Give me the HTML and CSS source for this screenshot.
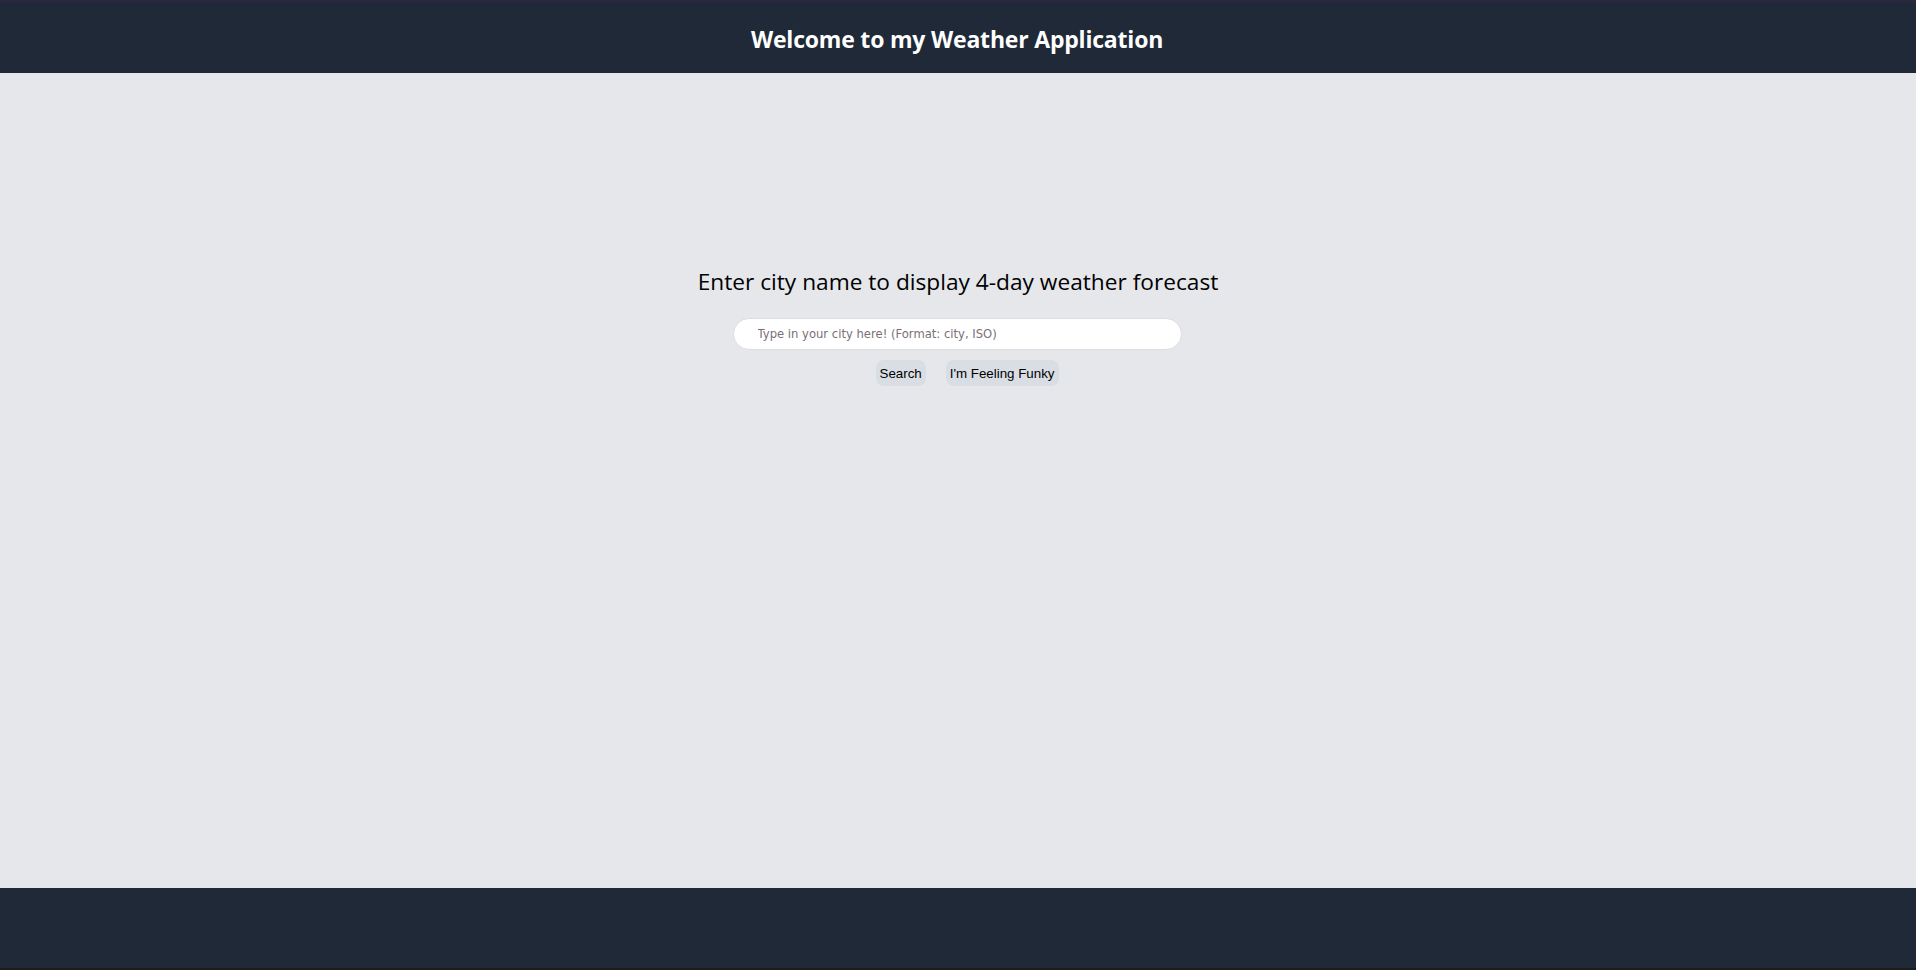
FILE: index.html
```html
<!DOCTYPE html>
<html lang="en">
<head>
<meta charset="utf-8">
<title>Weather Application</title>
<link rel="stylesheet" href="styles.css">
</head>
<body>
<div class="page">
  <div class="topstrip"></div>
  <header class="header">
    <h1 class="title">Welcome to my Weather Application</h1>
  </header>
  <main class="main">
    <h2 class="prompt">Enter city name to display 4-day weather forecast</h2>
    <input class="city-input" type="text" placeholder="Type in your city here! (Format: city, ISO)">
    <div class="actions">
      <button class="btn" type="button">Search</button>
      <button class="btn" type="button">I'm Feeling Funky</button>
    </div>
  </main>
  <footer class="footer"></footer>
  <div class="bottomline"></div>
</div>
</body>
</html>
```

FILE: styles.css
```css
* { box-sizing: border-box; }
html, body { margin: 0; padding: 0; }
body {
  background: #e5e7eb;
  font-family: "Open Sans", "Noto Sans", sans-serif;
}
.page {
  height: 970px;
  display: flex;
  flex-direction: column;
}
.topstrip {
  height: 2px;
  background: #2e2540;
}
.header {
  height: 71px;
  padding-top: 2px;
  background: #1f2937;
  display: flex;
  align-items: center;
  justify-content: center;
}
.title {
  margin: 0 0 0 -2px;
  color: #ffffff;
  font-size: 23px;
  font-weight: 700;
  letter-spacing: -0.2px;
}
.main {
  flex: 1;
  display: flex;
  flex-direction: column;
  align-items: center;
  padding-top: 193px;
}
.prompt {
  margin: 0 0 20px;
  font-size: 22.7px;
  font-weight: 400;
  line-height: 32px;
  color: #000;
}
.city-input {
  width: 449px;
  height: 32px;
  margin-left: -2px;
  border: 1px solid #dcdde0;
  border-radius: 16px;
  background: #fff;
  padding: 0 24px;
  font-family: "DejaVu Sans", Tahoma, sans-serif;
  font-size: 11.6px;
  outline: none;
}
.city-input::placeholder { color: #7a6f78; }
.actions {
  display: flex;
  gap: 20px;
  margin-top: 10px;
  margin-left: 18px;
}
.btn {
  height: 26px;
  padding: 0 4px;
  border: none;
  border-radius: 8px;
  background: #d9dde4;
  font-family: "Liberation Sans", Arial, sans-serif;
  font-size: 13.33px;
  color: #000;
}
.footer {
  height: 80px;
  background: #1f2937;
}
.bottomline {
  height: 2px;
  background: #1c1c1c;
}
```
